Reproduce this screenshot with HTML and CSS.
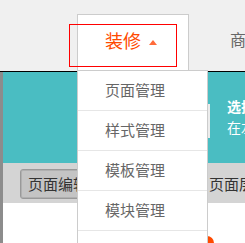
FILE: index.html
```html
<!DOCTYPE html>
<html lang="zh-CN">
<head>
  <meta charset="UTF-8">
  <title>店铺装修</title>
  <link rel="stylesheet" href="styles.css">
</head>
<body>

  <div class="topbar">
    <div class="nav-item active">
      <span class="nav-label">装修</span><span class="caret"></span>
      <span class="focus-box"></span>
      <ul class="dropdown">
        <li>页面管理</li>
        <li>样式管理</li>
        <li>模板管理</li>
        <li>模块管理</li>
        <li>装修备份</li>
      </ul>
    </div>
    <div class="nav-item">商品</div>
  </div>

  <div class="workspace">
    <div class="side-strip"></div>
    <div class="main">
      <div class="banner">
        <div class="preview-box"></div>
        <div class="banner-text">
          <p class="banner-title">选择页面</p>
          <p class="banner-sub">在左侧选择</p>
        </div>
      </div>
      <div class="toolbar">
        <span class="tool-tab current">页面编辑</span>
        <span class="tool-tab">页面层级</span>
      </div>
      <div class="canvas">
        <span class="dot"></span>
      </div>
    </div>
  </div>

</body>
</html>
```

FILE: styles.css
```css
body {
  margin: 0;
  font-family: "Noto Sans CJK SC", "Noto Sans", sans-serif;
  background-color: #fff;
  overflow: hidden;
}

.topbar {
  display: flex;
  align-items: flex-start;
  height: 57px;
  padding: 14px 0 0 77px;
  background-color: #f0f0f0;
  border-bottom: 1px solid #000;
}

.nav-item {
  flex-shrink: 0;
  font-size: 16px;
  color: #666;
  line-height: 50px;
  margin-left: 41px;
  white-space: nowrap;
}

.nav-item.active {
  position: relative;
  z-index: 5;
  width: 112px;
  height: 56px;
  margin-left: 0;
  padding-left: 27px;
  box-sizing: border-box;
  background-color: #fff;
  border: 1px solid #ccc;
  border-bottom: none;
}

.nav-label {
  font-size: 18px;
  color: #ff4a00;
}

.caret {
  display: inline-block;
  margin-left: 8px;
  vertical-align: 3px;
  border-left: 4.5px solid transparent;
  border-right: 4.5px solid transparent;
  border-bottom: 5px solid #ff6b3a;
}

.focus-box {
  position: absolute;
  left: -9px;
  top: 9px;
  width: 106px;
  height: 41px;
  border: 1px solid #f00;
}

.dropdown {
  position: absolute;
  left: -1px;
  top: 55px;
  width: 129px;
  margin: 0;
  padding: 0;
  list-style: none;
  background-color: #fff;
  border: 1px solid #ccc;
}

.dropdown li {
  height: 39px;
  line-height: 37px;
  padding-left: 27px;
  font-size: 15px;
  color: #666;
  border-bottom: 1px solid #e6e6e6;
}

.workspace {
  display: flex;
  height: 171px;
}

.side-strip {
  width: 3px;
  flex-shrink: 0;
  background-color: #8c8c8c;
}

.main {
  flex: 1;
  display: flex;
  flex-direction: column;
  min-width: 0;
}

.banner {
  display: flex;
  align-items: flex-start;
  height: 91px;
  padding: 24px 0 0 147px;
  box-sizing: border-box;
  background-color: #4abdc2;
}

.preview-box {
  flex-shrink: 0;
  width: 60px;
  height: 34px;
  margin-top: 8px;
  background-color: #ececec;
}

.banner-text {
  flex-shrink: 0;
  margin-left: 17px;
  color: #fff;
  font-size: 14px;
  line-height: 21px;
  white-space: nowrap;
}

.banner-text p {
  margin: 0;
}

.banner-title {
  font-weight: bold;
}

.toolbar {
  display: flex;
  align-items: flex-start;
  height: 40px;
  padding: 6px 0 0 17px;
  box-sizing: border-box;
  background-color: #d4d4d4;
  white-space: nowrap;
}

.tool-tab {
  flex-shrink: 0;
  height: 30px;
  line-height: 28px;
  padding: 0 8px 0 7px;
  font-size: 15px;
  color: #333;
  box-sizing: border-box;
  border: 1px solid transparent;
}

.tool-tab.current {
  width: 120px;
  background-color: #c4c4c4;
  border: 1px solid #999;
  border-radius: 3px;
  box-shadow: inset 0 0 0 1px #b0b0b0;
}

.tool-tab + .tool-tab {
  margin-left: 61px;
}

.canvas {
  position: relative;
  flex: 1;
  background-color: #fff;
}

.dot {
  position: absolute;
  left: 197px;
  top: 33px;
  width: 14px;
  height: 14px;
  border-radius: 50%;
  background-color: #ff4a00;
}
```
